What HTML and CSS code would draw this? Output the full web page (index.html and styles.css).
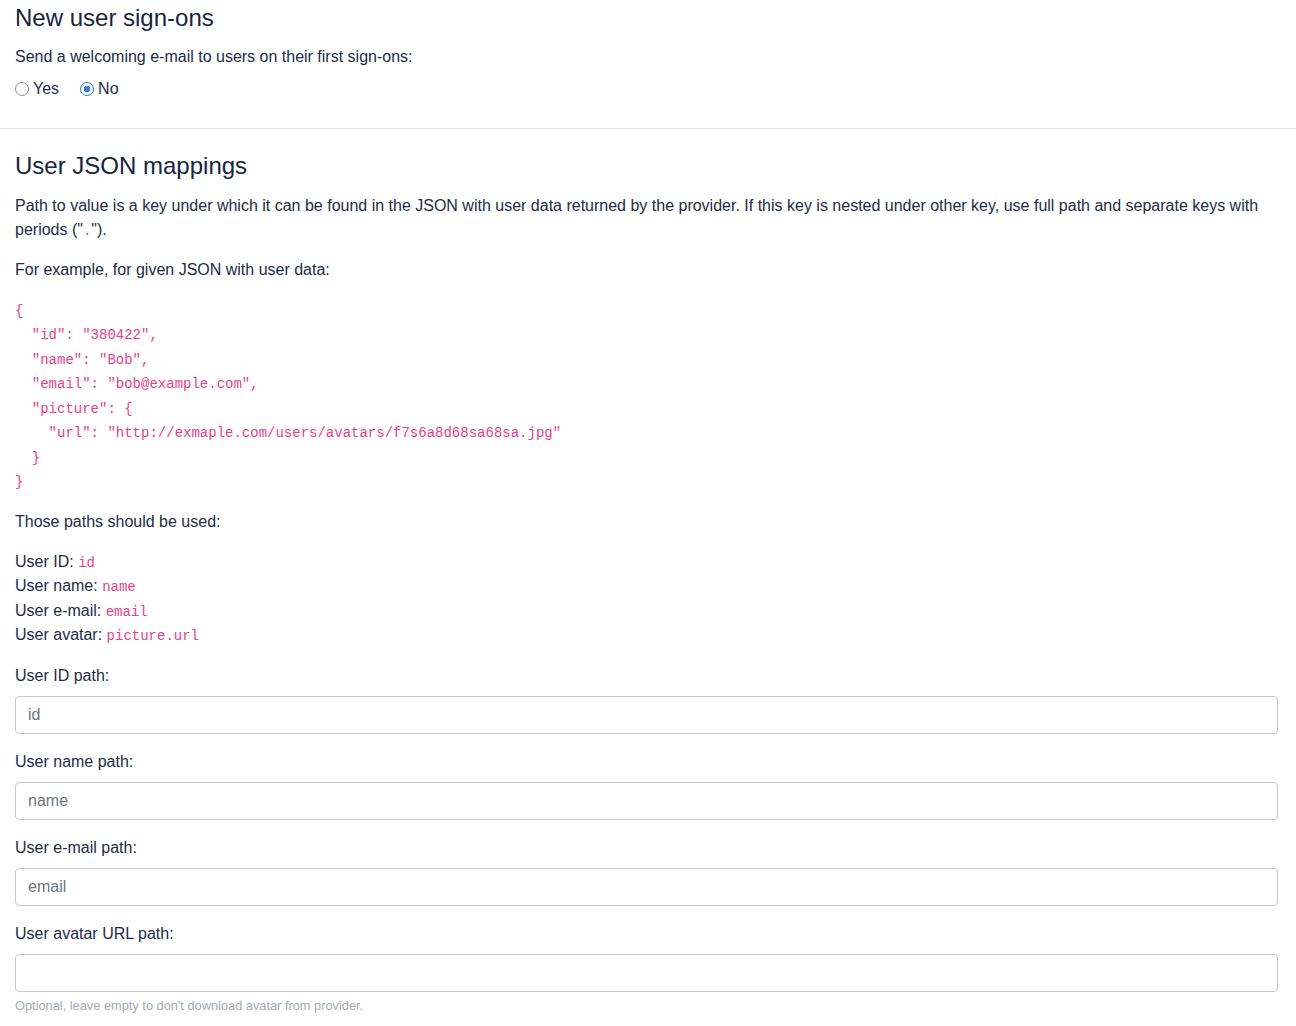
FILE: index.html
```html
<!DOCTYPE html>
<html>
<head>
  <title>Sign-on settings</title>
  <link rel="stylesheet" href="styles.css">
</head>
<body>
  <section class="panel panel-top">
    <h4 class="title">New user sign-ons</h4>
    <p class="lead">Send a welcoming e-mail to users on their first sign-ons:</p>
    <div class="radios">
      <label class="radio"><input type="radio" name="welcome" value="yes"> Yes</label>
      <label class="radio"><input type="radio" name="welcome" value="no" checked> No</label>
    </div>
  </section>

  <hr class="divider">

  <section class="panel">
    <h4 class="title">User JSON mappings</h4>
    <p>Path to value is a key under which it can be found in the JSON with user data returned by the provider. If this key is nested under other key, use full path and separate keys with periods ("<code>.</code>").</p>
    <p class="before-code">For example, for given JSON with user data:</p>
<pre class="json">{
  "id": "380422",
  "name": "Bob",
  "email": "bob@example.com",
  "picture": {
    "url": "http://exmaple.com/users/avatars/f7s6a8d68sa68sa.jpg"
  }
}</pre>
    <p>Those paths should be used:</p>
    <p class="paths">
      User ID: <code>id</code><br>
      User name: <code>name</code><br>
      User e-mail: <code>email</code><br>
      User avatar: <code>picture.url</code>
    </p>

    <div class="field">
      <label class="field-label" for="f-id">User ID path:</label>
      <input class="input" id="f-id" type="text" placeholder="id">
    </div>
    <div class="field">
      <label class="field-label" for="f-name">User name path:</label>
      <input class="input" id="f-name" type="text" placeholder="name">
    </div>
    <div class="field">
      <label class="field-label" for="f-email">User e-mail path:</label>
      <input class="input" id="f-email" type="text" placeholder="email">
    </div>
    <div class="field">
      <label class="field-label" for="f-avatar">User avatar URL path:</label>
      <input class="input" id="f-avatar" type="text">
      <small class="help">Optional, leave empty to don't download avatar from provider.</small>
    </div>
  </section>
</body>
</html>
```
FILE: styles.css
```css
body {
  margin: 0;
  font-family: "Liberation Sans", Arial, sans-serif;
  font-size: 16px;
  line-height: 1.5;
  color: #1d2c45;
  background: #fff;
}

.panel {
  padding: 0 18px 0 15px;
}

.panel-top {
  padding-top: 4px;
}

.title {
  margin: 0 0 13px;
  font-size: 24px;
  font-weight: 400;
  line-height: 1.2;
  color: #172441;
}

.panel-top .title {
  margin-bottom: 12px;
}

p {
  margin: 0 0 16px;
}

p.lead {
  margin-bottom: 8px;
}

code {
  font-family: "Liberation Mono", "Courier New", monospace;
  font-size: 14px;
  line-height: 1;
  color: #e83e8c;
}

.radios {
  display: flex;
  align-items: center;
  height: 24px;
}

.radio {
  display: inline-flex;
  align-items: center;
  margin-right: 21px;
}

.radio input {
  appearance: none;
  box-sizing: border-box;
  width: 14px;
  height: 14px;
  margin: 0 4px 0 0;
  border: 1.5px solid #8b9099;
  border-radius: 50%;
  background: #fff;
}

.radio input:checked {
  border-color: #2f7fe6;
  background: radial-gradient(circle, #2f7fe6 0 3px, #fff 3.6px);
}

.divider {
  margin: 27px 0 23px;
  border: 0;
  border-top: 1px solid #e3e5ea;
}

p.before-code {
  margin-bottom: 17px;
}

.json {
  margin: 0 0 15px;
  font-family: "Liberation Mono", "Courier New", monospace;
  font-size: 14px;
  line-height: 24.5px;
  color: #e83e8c;
}

.paths {
  line-height: 24.5px;
}

.field {
  margin-bottom: 16px;
}

.field-label {
  display: block;
  margin-bottom: 8px;
}

.input {
  display: block;
  box-sizing: border-box;
  width: 100%;
  height: 38px;
  padding: 6px 12px;
  font-family: inherit;
  font-size: 16px;
  color: #495057;
  background: #fff;
  border: 1px solid #c4c9d1;
  border-radius: 4px;
}

.input::placeholder {
  color: #6c757d;
}

.help {
  display: block;
  margin-top: 4px;
  font-size: 12.8px;
  color: #a3aab5;
}
```
